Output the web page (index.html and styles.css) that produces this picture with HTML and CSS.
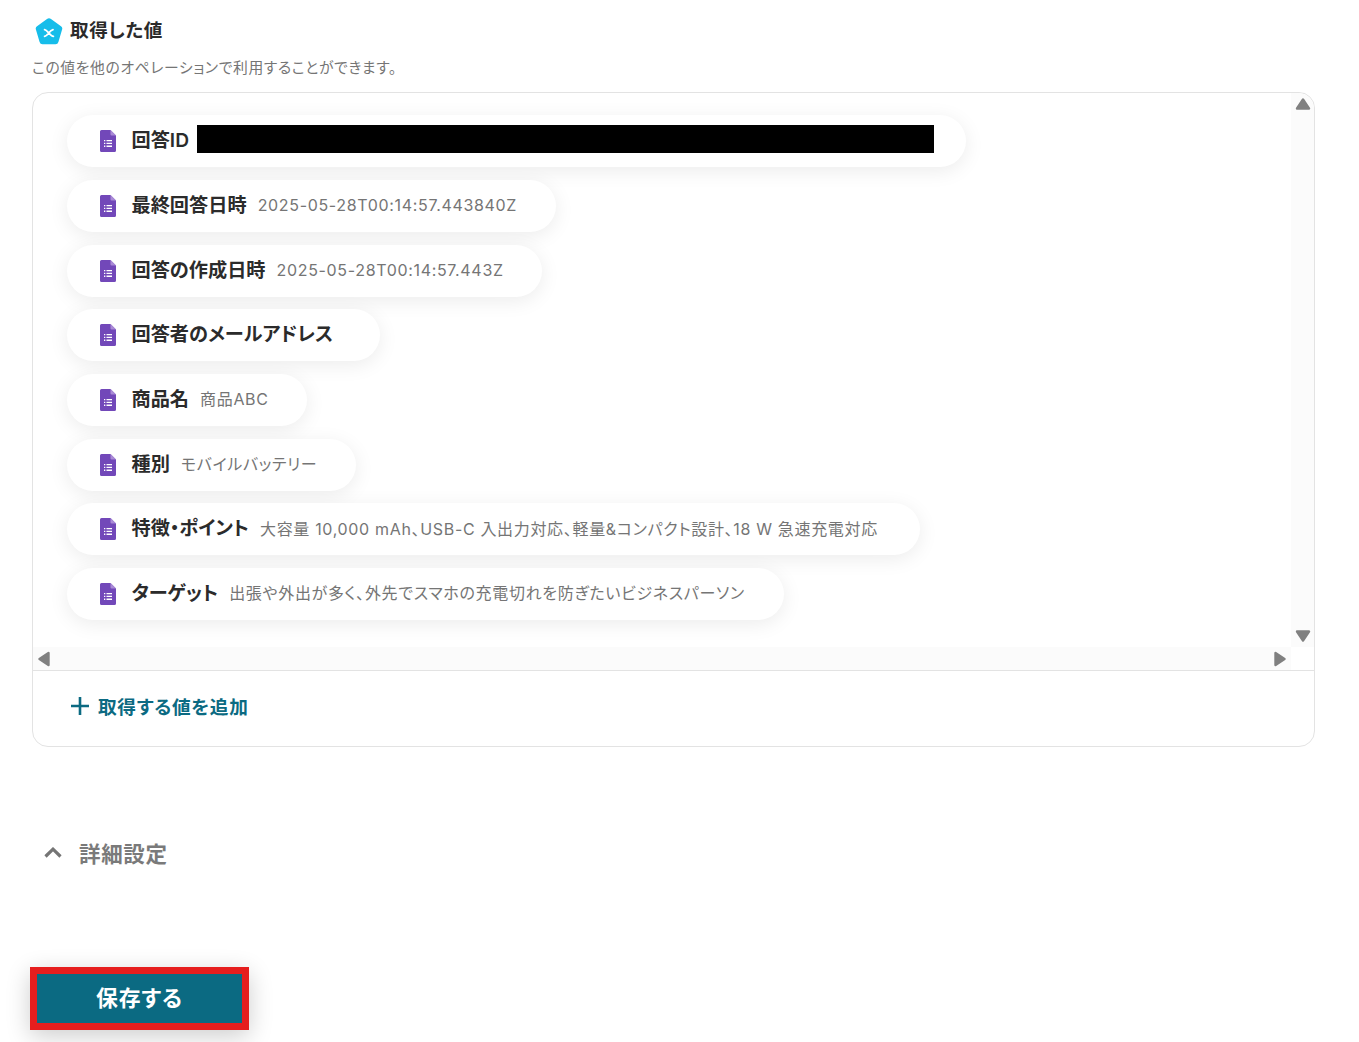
FILE: index.html
```html
<!DOCTYPE html>
<html lang="ja">
<head>
<meta charset="utf-8">
<title>取得した値</title>
<link rel="stylesheet" href="styles.css">
</head>
<body>
<svg width="0" height="0" class="defs">
  <symbol id="doc" viewBox="0 0 16 22">
    <path d="M1.5 0H10.5L16 5.5V20.5A1.5 1.5 0 0 1 14.5 22H1.5A1.5 1.5 0 0 1 0 20.5V1.5A1.5 1.5 0 0 1 1.5 0Z" fill="#7248b9"/>
    <path d="M10.5 0L16 5.5H11.5A1 1 0 0 1 10.5 4.5Z" fill="#a98ad6"/>
    <path d="M4 10h1.3v1.3H4zM6.5 10H12v1.3H6.5zM4 12.8h1.3v1.3H4zM6.5 12.8H12v1.3H6.5zM4 15.6h1.3v1.3H4zM6.5 15.6H12v1.3H6.5z" fill="#fff"/>
  </symbol>
</svg>
<main class="page">
  <header class="head">
    <svg class="logo" viewBox="0 0 28 27" width="28" height="27">
      <path d="M12 1 2 8.2A3 3 0 0 0 .9 11.6L4.6 24a3 3 0 0 0 2.9 2.2h13a3 3 0 0 0 2.9-2.2l3.7-12.4A3 3 0 0 0 26 8.2L16 1a3.4 3.4 0 0 0-4 0Z" fill="#16bdea"/>
      <path d="M9.6 11.6C12.5 12 15 18 18.4 18.4M18 11.6C14 12.4 13.5 17.6 9.6 18.4" stroke="#fff" stroke-width="1.8" stroke-linecap="round" fill="none"/>
    </svg>
    <h2 class="title">取得した値</h2>
  </header>
  <p class="sub">この値を他のオペレーションで利用することができます。</p>

  <section class="card">
    <div class="scroll">
      <div class="chips">
        <div class="chip chip-id"><svg class="doc"><use href="#doc"/></svg><span class="label">回答ID</span><span class="redact"></span></div>
        <div class="chip chip-2"><svg class="doc"><use href="#doc"/></svg><span class="label">最終回答日時</span><span class="val">2025-05-28T00:14:57.443840Z</span></div>
        <div class="chip chip-3"><svg class="doc"><use href="#doc"/></svg><span class="label">回答の作成日時</span><span class="val">2025-05-28T00:14:57.443Z</span></div>
        <div class="chip chip-4"><svg class="doc"><use href="#doc"/></svg><span class="label">回答者のメールアドレス</span></div>
        <div class="chip chip-5"><svg class="doc"><use href="#doc"/></svg><span class="label">商品名</span><span class="val">商品ABC</span></div>
        <div class="chip chip-6"><svg class="doc"><use href="#doc"/></svg><span class="label">種別</span><span class="val">モバイルバッテリー</span></div>
        <div class="chip chip-7"><svg class="doc"><use href="#doc"/></svg><span class="label">特徴・ポイント</span><span class="val">大容量 10,000 mAh、USB-C 入出力対応、軽量&amp;コンパクト設計、18 W 急速充電対応</span></div>
        <div class="chip chip-8"><svg class="doc"><use href="#doc"/></svg><span class="label">ターゲット</span><span class="val">出張や外出が多く、外先でスマホの充電切れを防ぎたいビジネスパーソン</span></div>
      </div>
      <div class="vbar">
        <svg class="arrow" viewBox="0 0 16 12" width="16" height="12"><path d="M8 1.5 14 10.5H2Z" fill="#808080" stroke="#808080" stroke-width="2.4" stroke-linejoin="round"/></svg>
        <svg class="arrow" viewBox="0 0 16 12" width="16" height="12"><path d="M8 10.5 14 1.5H2Z" fill="#808080" stroke="#808080" stroke-width="2.4" stroke-linejoin="round"/></svg>
      </div>
      <div class="hbar">
        <svg class="arrow" viewBox="0 0 12 16" width="12" height="16"><path d="M1.5 8 10.5 2V14Z" fill="#808080" stroke="#808080" stroke-width="2.4" stroke-linejoin="round"/></svg>
        <svg class="arrow" viewBox="0 0 12 16" width="12" height="16"><path d="M10.5 8 1.5 2V14Z" fill="#808080" stroke="#808080" stroke-width="2.4" stroke-linejoin="round"/></svg>
      </div>
    </div>
    <div class="add">
      <svg class="plus" viewBox="0 0 18 18" width="18" height="18"><path d="M9 0V18M0 9H18" stroke="#0b6a82" stroke-width="2.6"/></svg>
      <span>取得する値を追加</span>
    </div>
  </section>

  <div class="detail">
    <svg class="chev" viewBox="0 0 18 11" width="18" height="11"><path d="M1.5 9.5 9 2.2 16.5 9.5" stroke="#757575" stroke-width="3.2" fill="none"/></svg>
    <span>詳細設定</span>
  </div>

  <button class="save" type="button">保存する</button>
</main>
</body>
</html>
```
FILE: styles.css
```css
* { box-sizing: border-box; }
html, body { margin: 0; padding: 0; background: #fff; }
body {
  height: 1042px;
  overflow: hidden;
  font-family: Inter, "Noto Sans CJK JP", sans-serif;
  font-feature-settings: "palt";
  letter-spacing: 0.04em;
  color: #262626;
}
.defs { position: absolute; }
.page { padding: 17px 44px 0 32px; display: flex; flex-direction: column; align-items: flex-start; }
.head { display: flex; align-items: center; gap: 7px; height: 26px; padding-left: 3px; }
.logo { flex: none; margin-top: 2px; }
.title { margin: 0; font-size: 18.6px; font-weight: 600; line-height: 26px; color: #2b2b2b; }
.sub { margin: 14px 0 0; font-size: 14.8px; line-height: 22px; color: #757575; }
.card {
  margin-top: 13px;
  width: 1283px;
  height: 655px;
  border: 1px solid #e3e3e3;
  border-radius: 16px;
  display: flex;
  flex-direction: column;
}
.scroll {
  height: 578px;
  border-bottom: 1px solid #e3e3e3;
  display: grid;
  grid-template-columns: 1fr 23px;
  grid-template-rows: 1fr 23px;
  border-radius: 16px 16px 0 0;
  overflow: hidden;
}
.chips {
  padding: 22.2px 0 0 34px;
  display: flex;
  flex-direction: column;
  align-items: flex-start;
  gap: 12.68px;
  overflow: hidden;
}
.chip {
  height: 52px;
  flex: none;
  border-radius: 26px;
  background: #fff;
  box-shadow: 0 4px 20px rgba(0, 0, 0, 0.08);
  display: flex;
  align-items: center;
  padding-left: 33px;
  white-space: nowrap;
}
.chip-id { width: 899px; }
.chip-2 { width: 489px; }
.chip-3 { width: 475px; }
.chip-4 { width: 313px; }
.chip-5 { width: 240px; }
.chip-6 { width: 289px; }
.chip-7 { width: 853px; }
.chip-8 { width: 717px; }
.doc { width: 16px; height: 22px; flex: none; margin-right: 15.5px; }
.label { font-size: 19.2px; letter-spacing: 0; font-weight: 600; color: #2b2b2b; line-height: 26px; padding-bottom: 2px; }
.val { margin-left: 11px; font-size: 16px; letter-spacing: 0.67px; color: #757575; line-height: 26px; padding-bottom: 1px; }
.redact { width: 737px; height: 28px; margin-left: 7.5px; margin-bottom: 4px; background: #000; }
.vbar {
  background: #fbfbfb;
  display: flex;
  flex-direction: column;
  justify-content: space-between;
  align-items: center;
  padding: 5px 0 5px;
}
.hbar {
  background: #fbfbfb;
  display: flex;
  justify-content: space-between;
  align-items: center;
  padding: 0 5px;
}
.add {
  flex: 1;
  display: flex;
  align-items: center;
  gap: 9px;
  padding: 0 0 6px 38px;
  color: #0b6a82;
  font-size: 18.7px;
  font-weight: 600;
}
.detail {
  margin-top: 87px;
  height: 36px;
  padding-left: 12px;
  display: flex;
  align-items: center;
  gap: 17px;
  color: #7a7a7a;
  font-size: 21.5px;
  font-weight: 600;
}
.save {
  margin-top: 97px;
  margin-left: -2px;
  width: 219px;
  height: 63px;
  border: 7px solid #e61e1e;
  background: #0b6a82;
  color: #fff;
  padding: 0 0 4px;
  font: 700 21.8px Inter, "Noto Sans CJK JP", sans-serif;
  font-feature-settings: "palt";
  letter-spacing: 0.04em;
  box-shadow: 0 6px 24px rgba(0, 0, 0, 0.2);
}
```
